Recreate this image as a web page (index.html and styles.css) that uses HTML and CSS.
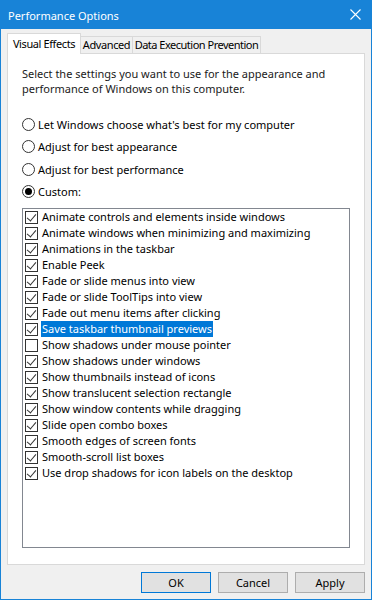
FILE: index.html
```html
<!DOCTYPE html>
<html lang="en">
<head>
  <meta charset="UTF-8">
  <title>Performance Options</title>
  <link rel="stylesheet" href="styles.css">
</head>
<body>
  <div class="janela">
    <div class="barra-titulo">
      <span class="titulo">Performance Options</span>
      <svg class="fechar" width="11" height="11" viewBox="0 0 11 11">
        <path d="M0.5 0.5 L10.5 10.5 M10.5 0.5 L0.5 10.5" stroke="#fff" stroke-width="1.1" fill="none"/>
      </svg>
    </div>

    <div class="conteudo">
      <div class="abas">
        <div class="aba ativa">Visual Effects</div>
        <div class="aba aba-avancado">Advanced</div>
        <div class="aba aba-dep">Data Execution Prevention</div>
      </div>

      <div class="painel">
        <p class="descricao">Select the settings you want to use for the appearance and performance of Windows on this computer.</p>

        <div class="opcoes">
          <div class="opcao"><span class="radio"></span>Let Windows choose what's best for my computer</div>
          <div class="opcao"><span class="radio"></span>Adjust for best appearance</div>
          <div class="opcao"><span class="radio"></span>Adjust for best performance</div>
          <div class="opcao"><span class="radio marcado"></span>Custom:</div>
        </div>

        <div class="lista">
          <div class="item"><span class="caixa ok"></span><span class="rotulo">Animate controls and elements inside windows</span></div>
          <div class="item"><span class="caixa ok"></span><span class="rotulo">Animate windows when minimizing and maximizing</span></div>
          <div class="item"><span class="caixa ok"></span><span class="rotulo">Animations in the taskbar</span></div>
          <div class="item"><span class="caixa ok"></span><span class="rotulo">Enable Peek</span></div>
          <div class="item"><span class="caixa ok"></span><span class="rotulo">Fade or slide menus into view</span></div>
          <div class="item"><span class="caixa ok"></span><span class="rotulo">Fade or slide ToolTips into view</span></div>
          <div class="item"><span class="caixa ok"></span><span class="rotulo">Fade out menu items after clicking</span></div>
          <div class="item selecionado"><span class="caixa ok"></span><span class="rotulo">Save taskbar thumbnail previews</span></div>
          <div class="item"><span class="caixa"></span><span class="rotulo">Show shadows under mouse pointer</span></div>
          <div class="item"><span class="caixa ok"></span><span class="rotulo">Show shadows under windows</span></div>
          <div class="item"><span class="caixa ok"></span><span class="rotulo">Show thumbnails instead of icons</span></div>
          <div class="item"><span class="caixa ok"></span><span class="rotulo">Show translucent selection rectangle</span></div>
          <div class="item"><span class="caixa ok"></span><span class="rotulo">Show window contents while dragging</span></div>
          <div class="item"><span class="caixa ok"></span><span class="rotulo">Slide open combo boxes</span></div>
          <div class="item"><span class="caixa ok"></span><span class="rotulo">Smooth edges of screen fonts</span></div>
          <div class="item"><span class="caixa ok"></span><span class="rotulo">Smooth-scroll list boxes</span></div>
          <div class="item"><span class="caixa ok"></span><span class="rotulo">Use drop shadows for icon labels on the desktop</span></div>
        </div>
      </div>

      <div class="botoes">
        <button class="botao padrao">OK</button>
        <button class="botao">Cancel</button>
        <button class="botao">Apply</button>
      </div>
    </div>
  </div>
</body>
</html>
```

FILE: styles.css
```css
body {
  margin: 0;
  font-family: 'Noto Sans', 'DejaVu Sans', sans-serif;
  font-size: 11px;
  color: #000;
  background: #f0f0f0;
}

.janela {
  width: 372px;
  height: 600px;
  box-sizing: border-box;
  border: 1px solid #1883d7;
  border-top: none;
  background: #f0f0f0;
  display: flex;
  flex-direction: column;
}

.barra-titulo {
  height: 29px;
  background: #1883d7;
  color: #fff;
  display: flex;
  align-items: center;
  justify-content: space-between;
  padding: 0 10px 0 7px;
  flex-shrink: 0;
}

.titulo {
  font-size: 11px;
  padding-top: 1px;
}

.conteudo {
  flex: 1;
  display: flex;
  flex-direction: column;
  padding: 4px 6px 6px 6px;
}

.abas {
  display: flex;
  align-items: flex-end;
  height: 20px;
  position: relative;
  z-index: 1;
}

.aba {
  height: 17px;
  line-height: 16px;
  border: 1px solid #d9d9d9;
  border-bottom: none;
  border-left: none;
  background: #f0f0f0;
  box-sizing: border-box;
  white-space: nowrap;
  text-align: center;
  letter-spacing: -0.4px;
}

.aba.ativa {
  width: 74px;
  height: 21px;
  line-height: 19px;
  background: #fff;
  border-left: 1px solid #d9d9d9;
  margin-bottom: -1px;
}

.aba-avancado {
  width: 52px;
}

.aba-dep {
  width: 128px;
  letter-spacing: -0.5px;
}

.painel {
  flex: 1;
  background: #fff;
  border: 1px solid #d9d9d9;
  padding: 12px 14px 16px 14px;
  display: flex;
  flex-direction: column;
}

.descricao {
  margin: 0;
  line-height: 15px;
  color: #1a1a1a;
}

.opcoes {
  margin-top: 17px;
  display: flex;
  flex-direction: column;
}

.opcao {
  height: 22.5px;
  display: flex;
  align-items: center;
  gap: 3px;
}

.radio {
  width: 11px;
  height: 11px;
  border: 1px solid #333;
  border-radius: 50%;
  box-sizing: content-box;
  position: relative;
  flex-shrink: 0;
}

.radio.marcado::after {
  content: "";
  position: absolute;
  left: 2px;
  top: 2px;
  width: 7px;
  height: 7px;
  border-radius: 50%;
  background: #000;
}

.lista {
  flex: 1;
  margin-top: 5px;
  border: 1px solid #828790;
  padding: 0 2px;
}

.item {
  height: 16px;
  display: flex;
  align-items: center;
  gap: 2px;
  white-space: nowrap;
}

.caixa {
  width: 11px;
  height: 11px;
  border: 1px solid #333;
  position: relative;
  flex-shrink: 0;
  margin-right: 1px;
}

.caixa.ok::after {
  content: "";
  position: absolute;
  left: 3px;
  top: 0px;
  width: 4px;
  height: 8px;
  border-right: 1px solid #333;
  border-bottom: 1px solid #333;
  transform: rotate(40deg);
}

.rotulo {
  height: 16px;
  line-height: 16px;
  padding: 0 1px;
}

.selecionado .rotulo {
  background: #0078d7;
  color: #fff;
}

.botoes {
  display: flex;
  justify-content: flex-end;
  gap: 7px;
  margin-top: 7px;
}

.botao {
  width: 70px;
  height: 21px;
  font-family: inherit;
  font-size: 11px;
  background: #e1e1e1;
  border: 1px solid #adadad;
  padding: 0;
  color: #000;
}

.botao.padrao {
  border: 1px solid #0078d7;
}
```
